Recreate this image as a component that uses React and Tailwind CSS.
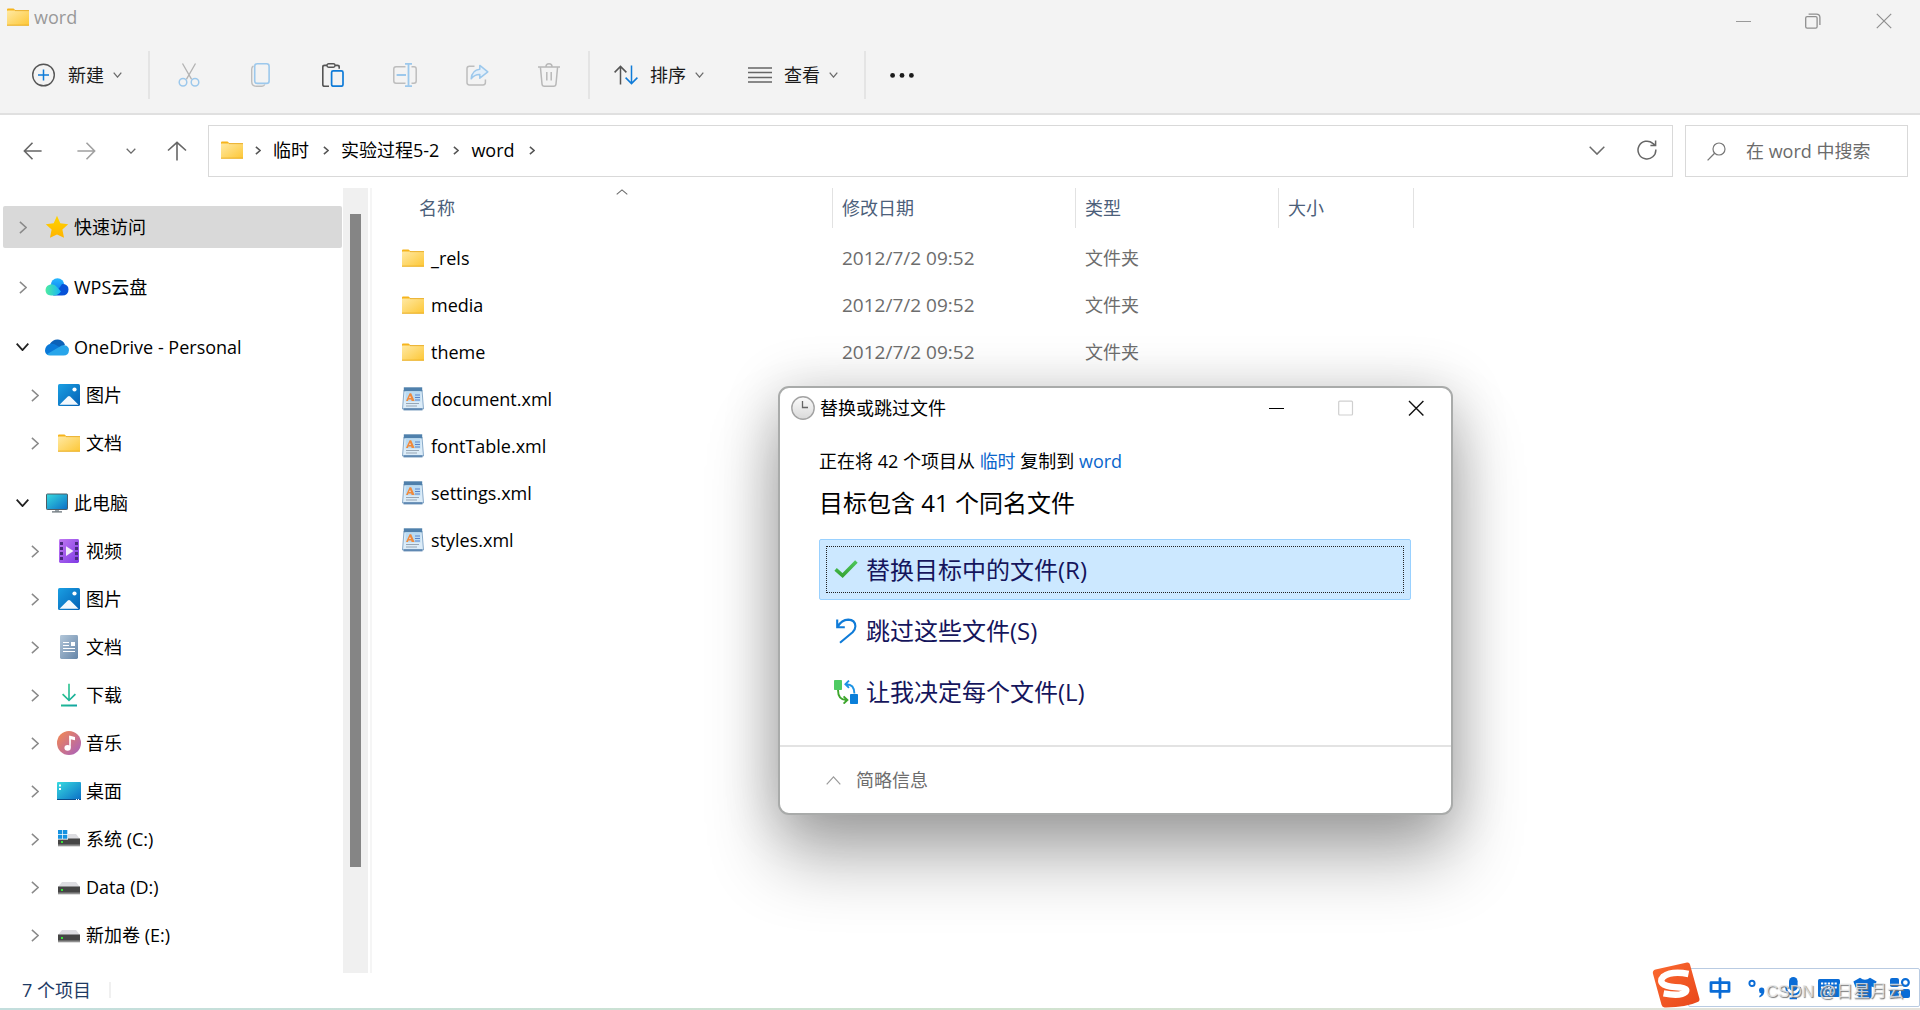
import React from 'react';

const FONT = "font-['Open_Sans','Noto_Sans_CJK_SC',sans-serif]";

// Gradients shared by the shell icons
const Gradients = () => (
  <svg width="0" height="0" className="absolute" aria-hidden="true">
    <defs>
      <linearGradient id="folder" x1="0" y1="0" x2="1" y2="1">
        <stop offset="0" stopColor="#ffe9a3" />
        <stop offset="1" stopColor="#fdc736" />
      </linearGradient>
      <linearGradient id="star" x1="0" y1="0" x2="0" y2="1">
        <stop offset="0" stopColor="#ffd400" />
        <stop offset="1" stopColor="#ffb400" />
      </linearGradient>
      <linearGradient id="azure" x1="0" y1="0" x2="1" y2="1">
        <stop offset="0" stopColor="#1a9fe3" />
        <stop offset="1" stopColor="#0460b4" />
      </linearGradient>
      <linearGradient id="screen" x1="0" y1="0" x2="1" y2="1">
        <stop offset="0" stopColor="#37dbe0" />
        <stop offset="1" stopColor="#0b6dc6" />
      </linearGradient>
      <linearGradient id="purple" x1="0" y1="0" x2="1" y2="1">
        <stop offset="0" stopColor="#c078f2" />
        <stop offset="1" stopColor="#7f3be4" />
      </linearGradient>
      <linearGradient id="slate" x1="0" y1="0" x2="1" y2="1">
        <stop offset="0" stopColor="#b3c7d9" />
        <stop offset="1" stopColor="#6585a8" />
      </linearGradient>
      <linearGradient id="green" x1="0" y1="0" x2="1" y2="1">
        <stop offset="0" stopColor="#33cf86" />
        <stop offset="1" stopColor="#0fa3a3" />
      </linearGradient>
      <linearGradient id="music" x1="0" y1="0" x2="1" y2="1">
        <stop offset="0" stopColor="#f68a4d" />
        <stop offset="1" stopColor="#a65fc0" />
      </linearGradient>
      <linearGradient id="cloudA" x1="0" y1="0" x2="1" y2="0">
        <stop offset="0" stopColor="#4deca0" />
        <stop offset="1" stopColor="#16b4fb" />
      </linearGradient>
      <linearGradient id="cloudB" x1="0" y1="0" x2="0" y2="1">
        <stop offset="0" stopColor="#26b8ff" />
        <stop offset="1" stopColor="#0a7cf0" />
      </linearGradient>
      <linearGradient id="tick" x1="0" y1="0" x2="0" y2="1">
        <stop offset="0" stopColor="#4cc65a" />
        <stop offset="1" stopColor="#38a636" />
      </linearGradient>
      <linearGradient id="clock" x1="0" y1="0" x2="0" y2="1">
        <stop offset="0" stopColor="#fbfbfb" />
        <stop offset="1" stopColor="#d9d9d9" />
      </linearGradient>
      <linearGradient id="sogou" x1="0" y1="0" x2="1" y2="1">
        <stop offset="0" stopColor="#fb6a30" />
        <stop offset="1" stopColor="#e8461a" />
      </linearGradient>
    </defs>
  </svg>
);

const Svg = ({ w, h, children, ...rest }) => (
  <svg width={w} height={h} viewBox={`0 0 ${w} ${h}`} fill="none" className="shrink-0" aria-hidden="true" {...rest}>
    {children}
  </svg>
);

const Chevron = ({ dir = 'down', w = 10, h = 6, color = '#6b6b6b', stroke = 1.3 }) => {
  const paths = {
    down: `M.7 .7L${w / 2} ${h - 0.9}L${w - 0.7} .7`,
    up: `M.7 ${h - 0.7}L${w / 2} .9L${w - 0.7} ${h - 0.7}`,
    right: `M.9 .9L${w - 0.9} ${h / 2}L.9 ${h - 0.9}`,
  };
  return (
    <Svg w={w} h={h}>
      <path d={paths[dir]} stroke={color} strokeWidth={stroke} />
    </Svg>
  );
};

const FolderIcon = () => (
  <Svg w={22} h={18}>
    <path d="M0 1.5Q0 .5 1 .5H6.5L8.5 2.2V5H0Z" fill="#f6b41c" />
    <rect y="2.5" width="22" height="15" rx=".6" fill="url(#folder)" />
    <path d="M8 2.6H22M0 17.2H22" stroke="#e8a91c" strokeWidth=".9" />
  </Svg>
);

const StarIcon = () => (
  <Svg w={24} h={24}>
    <path d="M12 .8L15.3 8.3L23.2 9.2L17.4 14.6L19 22.8L12 19.4L5 22.8L6.6 14.6L.8 9.2L8.7 8.3Z" fill="url(#star)" />
  </Svg>
);

const WpsCloudIcon = () => (
  <Svg w={24} h={18}>
    <circle cx="12.5" cy="7" r="6.8" fill="url(#cloudB)" />
    <path d="M17 6Q23.5 6 23.5 11.5Q23.5 17.5 17 17.5H8L15 9Z" fill="#0752d8" />
    <path d="M6.5 6.2Q10 6.2 12 9L16 13.5Q13 17.5 9 17.5H6Q.5 17 .5 12Q.8 7 6.5 6.2Z" fill="url(#cloudA)" />
  </Svg>
);

const OneDriveIcon = () => (
  <Svg w={24} h={17}>
    <path d="M4.5 5.5Q8 0 13 .5Q18.5 1 20 6L12 11Z" fill="#0c62b8" />
    <path d="M6 4.8Q9 4.6 11 6L17 9.5L3 16Q0 14.5 0 11.5Q.3 6 6 4.8Z" fill="#0a79d8" />
    <path d="M15 7.6Q17 5.8 19.5 6.2Q24 7 24 11.2Q23.6 16.5 18.5 16.5H5Q3 16.5 1.8 15.2Z" fill="#28a5ea" />
  </Svg>
);

const PictureIcon = () => (
  <Svg w={22} h={22}>
    <rect width="22" height="22" rx="1.6" fill="url(#azure)" />
    <path d="M1.5 20.8L9.8 12.6Q11 11.4 12.2 12.6L20.5 20.8Z" fill="#f2f8fd" />
    <circle cx="16.5" cy="5.5" r="2.1" fill="#fff" />
  </Svg>
);

const MonitorIcon = () => (
  <Svg w={22} h={20}>
    <rect x=".5" y="1" width="21" height="15.5" rx=".8" fill="url(#screen)" stroke="#4d5c66" />
    <path d="M9 17H13V18.5H9Z" fill="#9aa4aa" />
    <path d="M6 18.9H16" stroke="#5d686f" strokeWidth="1.2" />
  </Svg>
);

const VideoIcon = () => (
  <Svg w={20} h={24}>
    <rect width="20" height="24" rx="1.4" fill="url(#purple)" />
    {[3, 8, 13, 18].map((y) => (
      <g key={y} fill="#4a2a80">
        <rect x="1" y={y} width="3" height="3" />
        <rect x="16" y={y} width="3" height="3" />
      </g>
    ))}
    <path d="M7 7.2V17L14.5 12.1Z" fill="#f3eefa" />
  </Svg>
);

const DocIcon = () => (
  <Svg w={18} h={24}>
    <rect width="18" height="24" rx="1.4" fill="url(#slate)" />
    <path d="M3 7.5H9M3 10.5H9M3 13.5H15M3 16.5H15" stroke="#fff" strokeWidth="1.1" />
    <rect x="11" y="7" width="4" height="4" fill="#fff" />
  </Svg>
);

const DownloadIcon = () => (
  <Svg w={16} h={24}>
    <path d="M7.2 .8H8.8V15.5L13.8 10.6L15 11.8L8 18.6L1 11.8L2.2 10.6L7.2 15.5ZM0 21.6H16V23.4H0Z" fill="url(#green)" />
  </Svg>
);

const MusicIcon = () => (
  <Svg w={24} h={24}>
    <circle cx="12" cy="12" r="12" fill="url(#music)" />
    <path d="M12.2 4.5L18 6V9.2L13.6 8.2V16Z" fill="#fff" />
    <path d="M12.2 5H13.7V16.5H12.2Z" fill="#fff" />
    <ellipse cx="10.6" cy="16.8" rx="3.2" ry="2.9" fill="#fff" />
  </Svg>
);

const DesktopIcon = () => (
  <Svg w={24} h={18}>
    <rect width="24" height="18" rx="1" fill="url(#screen)" />
    <path d="M0 17H24V17.4Q24 18 23 18H1Q0 18 0 17.4Z" fill="#0b4b8a" />
    <path d="M2 2.5H4V4.5H2ZM2 6H4V8H2ZM19 17H20V18H19ZM21 17H22V18H21Z" fill="#fff" />
  </Svg>
);

const DriveIcon = ({ system }) => (
  <Svg w={22} h={18}>
    <path d="M4 4H18L22 9H0Z" fill="#dddde1" />
    <rect y="8.5" width="22" height="7" fill="#454545" />
    <rect y="14.5" width="22" height="1.8" fill="#8f8f8f" />
    <rect x="3" y="11" width="2" height="2" fill="#38e038" />
    {system && (
      <>
        <path d="M0 0H10V9.6H0Z" fill="#fff" />
        <path d="M0 0H4.3V4H0ZM5 0H9.3V4H5ZM0 4.7H4.3V8.7H0ZM5 4.7H9.3V8.7H5Z" fill="#1592e0" />
      </>
    )}
  </Svg>
);

const XmlIcon = () => (
  <Svg w={22} h={24}>
    <path d="M2 3H20L21.5 22H.5Z" fill="#dcecf8" stroke="#6f97bd" strokeWidth=".8" />
    <rect x="1.8" y=".3" width="18.4" height="4" fill="#4f80ac" />
    <rect x="3.5" y="4.5" width="15" height="10" fill="#b9dbf4" />
    <path d="M4 14L7.6 6.2H9.2L12.6 14H9.6L9.2 12.4H6.4L6 14Z" fill="#f08a3c" />
    <path d="M7.2 11H8.8L8 8.7Z" fill="#e6f2fb" />
    <path d="M13 8H18M13 10.5H18M13 13H18" stroke="#5b83c9" strokeWidth="1" />
    <path d="M4 16.5H17M4 19H15" stroke="#97a6b5" strokeWidth="1" />
    <path d="M1.5 21.2H20.5V23.4H1.5Z" fill="#5f88b2" />
  </Svg>
);

const commands = [
  {
    label: '剪切',
    icon: (
      <Svg w={24} h={24}>
        <path d="M5.5 .5L14.6 16.4M18.5 .5L9.4 16.4" stroke="#b3b3b3" strokeWidth="1.3" />
        <circle cx="6" cy="19.2" r="3.8" stroke="#9cc8ec" strokeWidth="1.5" />
        <circle cx="18" cy="19.2" r="3.8" stroke="#9cc8ec" strokeWidth="1.5" />
      </Svg>
    ),
  },
  {
    label: '复制',
    icon: (
      <Svg w={24} h={24}>
        <path d="M4.5 3Q2.7 3.8 2.7 6V18.5Q2.7 23.2 7.4 23.2H13Q15 23.2 15.8 21.5" stroke="#bdbdbd" strokeWidth="1.4" />
        <rect x="5.7" y=".8" width="14.4" height="19.6" rx="2.4" stroke="#9cc8ec" strokeWidth="1.6" />
      </Svg>
    ),
  },
  {
    label: '粘贴',
    icon: (
      <Svg w={24} h={24}>
        <path d="M8 23.2H3.6Q1.8 23.2 1.8 21.4V4Q1.8 2.4 3.6 2.4H6M14 2.4H16.4Q18.2 2.4 18.2 4V5.8" stroke="#555" strokeWidth="1.6" />
        <rect x="6" y=".8" width="8" height="3.4" rx="1.6" stroke="#555" strokeWidth="1.4" />
        <rect x="10.6" y="7.9" width="11.4" height="15.3" rx="1.6" fill="#f3f3f3" stroke="#0f7bd8" strokeWidth="1.7" />
      </Svg>
    ),
  },
  {
    label: '重命名',
    icon: (
      <Svg w={24} h={24}>
        <path d="M12.5 3.8H3Q.8 3.8 .8 6V18Q.8 20.2 3 20.2H12.5M18.5 3.8H21Q23.2 3.8 23.2 6V18Q23.2 20.2 21 20.2H18.5" stroke="#bdbdbd" strokeWidth="1.5" />
        <path d="M3.6 12H13M12 .8H19M12 23.2H19M15.5 .8V23.2" stroke="#9cc8ec" strokeWidth="1.8" />
      </Svg>
    ),
  },
  {
    label: '共享',
    icon: (
      <Svg w={24} h={24}>
        <path d="M9.5 3.2H4.4Q2 3.2 2 5.6V19.6Q2 22 4.4 22H18Q20.4 22 20.4 19.6V16.4" stroke="#bdbdbd" strokeWidth="1.5" />
        <path d="M14.8 2.4L22.8 8.9L14.8 15.2V11.6Q9.6 11.4 6.2 15.8Q7 7 14.8 6.3Z" fill="#e3effa" stroke="#9cc8ec" strokeWidth="1.5" strokeLinejoin="round" />
      </Svg>
    ),
  },
  {
    label: '删除',
    icon: (
      <Svg w={24} h={24}>
        <path d="M1 4H23M9 3.6Q9 .8 12 .8Q15 .8 15 3.6M3.4 4L5 21Q5.2 23.2 7.4 23.2H16.6Q18.8 23.2 19 21L20.6 4M9.8 9V17.6M14.2 9V17.6" stroke="#b8b8b8" strokeWidth="1.5" />
      </Svg>
    ),
  },
];

const treeGroups = [
  [{ label: '快速访问', icon: StarIcon, root: true, selected: true }],
  [{ label: 'WPS云盘', icon: WpsCloudIcon, root: true }],
  [
    { label: 'OneDrive - Personal', icon: OneDriveIcon, root: true, open: true },
    { label: '图片', icon: PictureIcon },
    { label: '文档', icon: FolderIcon },
  ],
  [
    { label: '此电脑', icon: MonitorIcon, root: true, open: true },
    { label: '视频', icon: VideoIcon },
    { label: '图片', icon: PictureIcon },
    { label: '文档', icon: DocIcon },
    { label: '下载', icon: DownloadIcon },
    { label: '音乐', icon: MusicIcon },
    { label: '桌面', icon: DesktopIcon },
    { label: '系统 (C:)', icon: () => <DriveIcon system /> },
    { label: 'Data (D:)', icon: DriveIcon },
    { label: '新加卷 (E:)', icon: DriveIcon },
  ],
];

const files = [
  { name: '_rels', date: '2012/7/2 09:52', type: '文件夹' },
  { name: 'media', date: '2012/7/2 09:52', type: '文件夹' },
  { name: 'theme', date: '2012/7/2 09:52', type: '文件夹' },
  { name: 'document.xml' },
  { name: 'fontTable.xml' },
  { name: 'settings.xml' },
  { name: 'styles.xml' },
];

const TitleBar = () => (
  <header className="flex h-9 items-start justify-between">
    <div className="flex items-center gap-[5px] pt-[3px] pl-[7px] text-[#999]">
      <FolderIcon />
      <h1 className="text-[18px] leading-7">word</h1>
    </div>
    <div className="flex pt-[5px]">
      <button aria-label="最小化" className="flex h-8 w-[70px] items-center justify-center">
        <Svg w={16} h={16}><path d="M1 8.5H16" stroke="#999" /></Svg>
      </button>
      <button aria-label="还原" className="flex h-8 w-[70px] items-center justify-center">
        <Svg w={16} h={16}>
          <rect x=".7" y="3.7" width="11.4" height="11.4" rx="1.4" stroke="#8f8f8f" strokeWidth="1.3" />
          <path d="M3.6 1.2H11.4Q14.9 1.2 14.9 4.6V12" stroke="#8f8f8f" strokeWidth="1.3" />
        </Svg>
      </button>
      <button aria-label="关闭" className="flex h-8 w-[72px] items-center justify-center">
        <Svg w={16} h={16}><path d="M.8 .8L15.2 15.2M15.2 .8L.8 15.2" stroke="#8f8f8f" strokeWidth="1.2" /></Svg>
      </button>
    </div>
  </header>
);

const Divider = () => <div className="h-12 w-0.5 bg-[#e4e4e4]" />;

const Toolbar = () => (
  <div className="flex h-[79px] items-start border-b-2 border-[#e0e0e0] pt-[15px] text-[#1a1a1a]">
    <button className="flex h-12 w-[148px] items-center gap-3 pl-8">
      <Svg w={24} h={24}>
        <circle cx="11.5" cy="12" r="10.8" stroke="#555" strokeWidth="1.4" />
        <path d="M6 12H17M11.5 6.5V17.5" stroke="#0f7bd8" strokeWidth="1.5" />
      </Svg>
      <span className="flex items-center gap-[9px]">新建 <Chevron w={9} h={6} /></span>
    </button>
    <Divider />
    <div className="flex w-[438px] gap-12 pl-[27px]">
      {commands.map((c) => (
        <button key={c.label} aria-label={c.label} className="flex h-12 w-6 items-center justify-center">
          {c.icon}
        </button>
      ))}
    </div>
    <Divider />
    <button className="flex h-12 w-[134px] items-center gap-3 pl-6">
      <Svg w={24} h={20}>
        <path d="M6.5 19.5V1.5M.6 7.4L6.5 1.4L12.4 7.4" stroke="#555" strokeWidth="1.5" />
        <path d="M17.5 .5V18.5M11.6 12.6L17.5 18.6L23.4 12.6" stroke="#0f7bd8" strokeWidth="1.5" />
      </Svg>
      <span className="flex items-center gap-[9px]">排序 <Chevron w={9} h={6} /></span>
    </button>
    <button className="flex h-12 w-[140px] items-center gap-3 pl-6">
      <Svg w={24} h={16}>
        <path d="M0 1H24M0 5.5H24M0 10.5H24M0 15H24" stroke="#666" strokeWidth="1.3" />
      </Svg>
      <span className="flex items-center gap-[9px]">查看 <Chevron w={9} h={6} /></span>
    </button>
    <Divider />
    <button aria-label="查看更多" className="flex h-12 items-center pl-6">
      <Svg w={24} h={6}>
        <circle cx="2.6" cy="3.4" r="2.4" fill="#1a1a1a" />
        <circle cx="12" cy="3.4" r="2.4" fill="#1a1a1a" />
        <circle cx="21.4" cy="3.4" r="2.4" fill="#1a1a1a" />
      </Svg>
    </button>
  </div>
);

const AddressRow = () => (
  <nav className="flex items-center gap-3 pt-2.5 pr-3 pb-[11px]">
    <div className="flex w-[196px] shrink-0 items-center pl-[23px]">
      <button aria-label="后退" className="mr-[35px]">
        <Svg w={19} h={18}><path d="M9.5 .8L1.4 9L9.5 17.2M1.4 9H18.6" stroke="#666" strokeWidth="1.6" /></Svg>
      </button>
      <button aria-label="前进" className="mr-[30px]">
        <Svg w={19} h={18}><path d="M9.5 .8L17.6 9L9.5 17.2M17.6 9H.4" stroke="#a0a0a0" strokeWidth="1.6" /></Svg>
      </button>
      <button aria-label="最近浏览的位置" className="mr-[31px]">
        <Chevron w={10} h={6} stroke={1.3} />
      </button>
      <button aria-label="上移">
        <Svg w={20} h={20}><path d="M1 9.5L10 1.4L19 9.5M10 1.4V19.6" stroke="#666" strokeWidth="1.6" /></Svg>
      </button>
    </div>
    <div className="flex h-[52px] flex-1 items-center border border-[#d9d9d9] pr-[15px] pb-0.5 pl-3">
      <FolderIcon />
      <ol className="flex flex-1 items-center gap-0.5">
        {['临时', '实验过程5-2', 'word'].map((part) => (
          <li key={part} className="flex items-center gap-3 pl-3">
            <Chevron dir="right" w={6} h={9} stroke={1.6} color="#555" />
            <a href="#" className="text-black">{part}</a>
          </li>
        ))}
        <li className="pl-3"><Chevron dir="right" w={6} h={9} stroke={1.6} color="#555" /></li>
      </ol>
      <button aria-label="以前的位置" className="mr-8">
        <Chevron w={16} h={9} stroke={1.5} />
      </button>
      <button aria-label="刷新">
        <Svg w={20} h={20}>
          <path d="M18.8 9.5A8.9 8.9 0 1 1 15.8 3.4L18.4 5.4M18.6 .4V5.5H13.4" stroke="#666" strokeWidth="1.5" />
        </Svg>
      </button>
    </div>
    <label className="flex h-[52px] w-[223px] items-center gap-5 border border-[#d9d9d9] pl-[21px]">
      <Svg w={19} h={19}>
        <circle cx="12" cy="7" r="6" stroke="#777" strokeWidth="1.2" />
        <path d="M7.6 11.2L.6 18.4" stroke="#777" strokeWidth="1.3" />
      </Svg>
      <input type="text" aria-label="搜索" placeholder="在 word 中搜索" className="w-full min-w-0 bg-transparent outline-none placeholder:text-[#6b6b6b]" />
    </label>
  </nav>
);

const TreeItem = ({ item }) => {
  const Icon = item.icon;
  return (
    <li>
      <button
        className={`flex h-[42px] w-full items-center rounded-xs ${item.root ? 'pl-[13px]' : 'pl-[25px]'} ${item.selected ? 'bg-[#d9d9d9]' : ''}`}
      >
        <span className="flex w-[13px] justify-center">
          {item.open
            ? <Chevron w={13} h={8} stroke={1.8} color="#222" />
            : <Chevron dir="right" w={8} h={13} stroke={1.5} color="#8a8a8a" />}
        </span>
        <span className="ml-4 flex w-6 justify-center"><Icon /></span>
        <span className="ml-[5px] text-black">{item.label}</span>
      </button>
    </li>
  );
};

const Sidebar = () => (
  <aside className="flex w-[372px] shrink-0 border-r-2 border-[#f5f5f5]">
    <div className="flex flex-1 flex-col gap-[18px] pt-[18px] pr-px pl-[3px]">
      {treeGroups.map((group, i) => (
        <ul key={i} className="flex flex-col gap-1.5">
          {group.map((item) => <TreeItem key={item.label} item={item} />)}
        </ul>
      ))}
    </div>
    <div className="mr-0.5 w-[25px] bg-[#f0f0f0] pt-[26px]">
      <div className="mx-auto h-[653px] w-[11px] bg-[#858585]" />
    </div>
  </aside>
);

const FileTable = () => (
  <section className="flex-1">
    <table className="w-full table-fixed border-collapse text-left">
      <colgroup>
        <col className="w-[460px]" />
        <col className="w-[243px]" />
        <col className="w-[203px]" />
        <col className="w-[135px]" />
        <col />
      </colgroup>
      <thead className="text-[#4c607a]">
        <tr className="h-[46px] align-top">
          <th className="p-0 font-normal">
            <div className="relative ml-10 flex h-10 items-center pl-[7px]">
              名称
              <span className="absolute top-px left-1/2 -translate-x-1/2"><Chevron dir="up" w={12} h={6} stroke={1.1} /></span>
            </div>
          </th>
          {['修改日期', '类型', '大小'].map((h) => (
            <th key={h} className="p-0 font-normal">
              <div className="flex h-10 items-center border-l border-[#e2e2e2] pl-[9px]">{h}</div>
            </th>
          ))}
          <td className="p-0"><div className="h-10 border-l border-[#e2e2e2]" /></td>
        </tr>
      </thead>
      <tbody>
        {files.map((f) => (
          <tr key={f.name} className="h-[47px] text-[#6d6d6d]">
            <td className="p-0">
              <div className="flex items-center gap-[7px] pl-[30px] text-black">
                {f.type ? <FolderIcon /> : <XmlIcon />}
                {f.name}
              </div>
            </td>
            <td className="p-0 pl-2.5 text-[19px]">{f.date}</td>
            <td className="p-0 pl-2.5">{f.type}</td>
            <td className="p-0" />
            <td className="p-0" />
          </tr>
        ))}
      </tbody>
    </table>
  </section>
);

const options = [
  {
    label: '替换目标中的文件(R)',
    focused: true,
    icon: <Svg w={24} h={24}><path d="M1.6 11.4L8.6 17.6L22.4 3.6" stroke="url(#tick)" strokeWidth="3.6" /></Svg>,
  },
  {
    label: '跳过这些文件(S)',
    icon: (
      <Svg w={24} h={26}>
        <path d="M3.2 1.4V9.2H10.8M3.6 8.8Q7.6 1.6 14.2 1.6Q21.2 1.8 21.4 8.2Q21.4 11.2 18.6 14.2L6 24.8" stroke="#0f7bd8" strokeWidth="2.1" />
      </Svg>
    ),
  },
  {
    label: '让我决定每个文件(L)',
    icon: (
      <Svg w={24} h={24}>
        <rect width="8" height="10" rx=".8" fill="#4ecb63" />
        <rect x="16" y="14" width="8" height="10" rx=".8" fill="#0a7fd9" />
        <path d="M4 10Q4 20 12.4 20M9.6 16.4L13.4 20L9.6 23.6" stroke="#3ea62c" strokeWidth="1.9" />
        <path d="M20.4 13.6Q20.4 4.2 12.2 4.2M15 .6L11.4 4.2L15 7.8" stroke="#1c93e4" strokeWidth="1.9" />
      </Svg>
    ),
  },
];

const ReplaceDialog = () => (
  <div
    role="dialog"
    aria-labelledby="dialog-title"
    className="absolute top-[386px] left-[778px] w-[675px] rounded-[11px] border-2 border-[#a9abaa] bg-white shadow-[0_44px_70px_rgba(0,0,0,0.3),0_4px_56px_rgba(0,0,0,0.2)]"
  >
    <div className="flex h-10 items-center justify-between pl-[11px]">
      <div className="flex items-center gap-[5px]">
        <Svg w={24} h={24}>
          <circle cx="12" cy="12" r="11.2" fill="url(#clock)" stroke="#a3a3a3" strokeWidth="1.4" />
          <path d="M11.5 5V11.5H17" stroke="#666" strokeWidth="1.3" />
        </Svg>
        <h2 id="dialog-title" className="text-black">替换或跳过文件</h2>
      </div>
      <div className="flex">
        <button aria-label="最小化" className="flex h-8 w-[70px] items-center justify-center">
          <Svg w={16} h={16}><path d="M0 8.5H15" stroke="#000" /></Svg>
        </button>
        <button aria-label="最大化" disabled className="flex h-8 w-[68px] items-center justify-center">
          <Svg w={16} h={16}><rect x=".7" y="1.2" width="13.8" height="13.8" rx="1" stroke="#cfcfcf" strokeWidth="1.2" /></Svg>
        </button>
        <button aria-label="关闭" className="flex h-8 w-[71px] items-center justify-center">
          <Svg w={16} h={16}><path d="M1 1L15.4 15.4M15.4 1L1 15.4" stroke="#111" strokeWidth="1.4" /></Svg>
        </button>
      </div>
    </div>
    <div className="pt-[19px] pr-10 pb-[23px] pl-[39px]">
      <p className="leading-7 text-black">
        正在将 42 个项目从 <a href="#" className="text-[#0a66cc]">临时</a> 复制到 <a href="#" className="text-[#0a66cc]">word</a>
      </p>
      <p className="pt-2.5 text-[24px] leading-9 text-black">目标包含 41 个同名文件</p>
      <div className="mt-[18px] flex flex-col">
        {options.map((o) => (
          <button
            key={o.label}
            className={`h-[61px] rounded-xs border p-1.5 text-left text-[24px] text-[#15155c] ${o.focused ? 'border-[#99d1ff] bg-[#cce8ff]' : 'border-transparent'}`}
          >
            <span className={`flex h-full items-center gap-2 border pl-[7px] ${o.focused ? 'border-dotted border-[#222]' : 'border-transparent'}`}>
              {o.icon}
              {o.label}
            </span>
          </button>
        ))}
      </div>
    </div>
    <div className="flex h-[68px] items-center border-t-2 border-[#e3e3e3] pl-[46px]">
      <button className="flex items-center gap-[15px] text-[#6d6d6d]">
        <Chevron dir="up" w={15} h={9} color="#9a9a9a" stroke={1.2} />
        简略信息
      </button>
    </div>
  </div>
);

const InputMethodBar = () => (
  <div className="absolute right-0 bottom-0.5 flex h-[46px] w-[268px] items-end">
    <div className="absolute right-0 bottom-px left-9 h-[39px] rounded-xs border border-[#b9cbe2] bg-white" />
    <div className="relative flex items-end">
      <Svg w={48} h={46}>
        <path d="M3.5 7.5L35 .6Q37.4 .2 38 2.6L47.4 36.5Q48 39 45.6 40Q34 45.6 12.6 45.4Q10.2 45.4 9.6 43L.9 11.5Q.4 8.4 3.5 7.5Z" fill="url(#sogou)" />
        <path d="M36.5 12Q20 8.6 11.4 14.6Q6.8 19.2 12 22.6Q17 25 28 25.4Q36 26.4 33.6 30Q29 34.6 11.6 31.4" stroke="#fff" strokeWidth="6.5" />
      </Svg>
    </div>
    <div className="relative flex h-10 flex-1 items-center pl-[9px] text-[#0a6cd6]">
      <button aria-label="中文输入" className="mr-[17px]">
        <Svg w={22} h={22} stroke="#0a6cd6" strokeWidth="2.8" strokeLinejoin="round" strokeLinecap="round">
          <path d="M2 5.6H20V14.4H2ZM11 1.6V20.4" />
        </Svg>
      </button>
      <button aria-label="中文标点" className="mr-[19px]">
        <Svg w={18} h={20}>
          <circle cx="4" cy="5.4" r="2.6" stroke="#0a6cd6" strokeWidth="1.9" />
          <path d="M11 12.4Q11 9.6 13.6 9.6Q16.4 9.6 16.4 13Q16.4 17.6 11.6 19.4L11.2 18Q13 17 13.4 15.2Q11 15 11 12.4Z" fill="#0a6cd6" />
        </Svg>
      </button>
      <button aria-label="语音" className="mr-[17px]">
        <Svg w={16} h={24}>
          <rect x="4" y="1" width="8.6" height="14" rx="4.3" fill="#0a6cd6" />
          <path d="M1 11Q1.6 18.6 8.3 18.6Q15 18.6 15.6 11M8.3 18.6V22M4.6 22.4H12" stroke="#0a6cd6" strokeWidth="1.8" />
        </Svg>
      </button>
      <button aria-label="软键盘" className="mr-[13px]">
        <Svg w={22} h={18}>
          <rect width="22" height="18" rx="1.6" fill="#0a6cd6" />
          <path d="M3 4.5H19M3 8.5H19M5.5 13.5H16.5" stroke="#fff" strokeWidth="1.9" strokeDasharray="2.2 1.2" />
        </Svg>
      </button>
      <button aria-label="皮肤" className="mr-[13px]">
        <Svg w={24} h={22}>
          <path d="M7 .8Q12 4.6 17 .8L23.6 4.4L21.4 10.4L18.6 9.6V21.2H5.4V9.6L2.6 10.4L.4 4.4Z" fill="#0a6cd6" />
        </Svg>
      </button>
      <button aria-label="工具箱">
        <Svg w={20} h={20}>
          <rect x="0" y="0" width="9" height="9" rx="2" fill="#0a6cd6" />
          <circle cx="15.4" cy="4.5" r="3.4" stroke="#0a6cd6" strokeWidth="2.2" />
          <rect x="0" y="11" width="9" height="9" rx="2" fill="#0a6cd6" />
          <rect x="11" y="11" width="9" height="9" rx="2" fill="#0a6cd6" />
        </Svg>
      </button>
    </div>
    <span className="absolute right-4 bottom-1 font-['Liberation_Sans','Noto_Sans_CJK_SC',sans-serif] text-[17px] leading-6 whitespace-nowrap text-[#e8e8e8]/80 [text-shadow:1px_1px_1px_#777]">
      CSDN @日星月云
    </span>
  </div>
);

export default function App() {
  return (
    <div className={`relative flex min-h-screen flex-col overflow-hidden bg-white text-[18px] leading-6 ${FONT}`}>
      <Gradients />
      <div className="bg-[#f3f3f3]">
        <TitleBar />
        <Toolbar />
      </div>
      <AddressRow />
      <main className="flex flex-1">
        <Sidebar />
        <FileTable />
      </main>
      <footer>
        <div className="flex h-[35px] items-center gap-[18px] pb-0.5 pl-[22px] text-[#1e3a63]">
          7 个项目
          <span className="h-4 w-0.5 bg-[#f0f0f0]" />
        </div>
        <div className="h-0.5 bg-linear-to-r from-[#c3dedd] via-[#cfe3cf] to-[#e6e2dc]" />
      </footer>
      <ReplaceDialog />
      <InputMethodBar />
    </div>
  );
}
